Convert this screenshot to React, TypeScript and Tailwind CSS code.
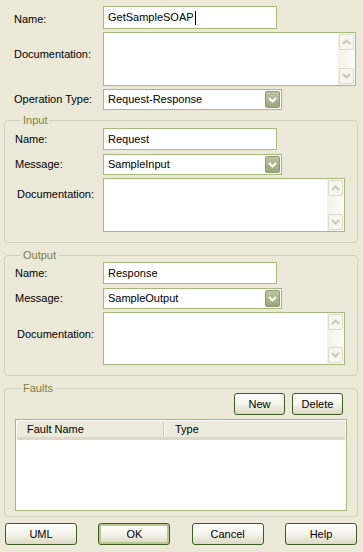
import React from 'react';

const font = { fontFamily: '"Liberation Sans", Arial, sans-serif' };

const Chevron = ({ up, color }: { up?: boolean; color: string }) => (
  <svg width="9" height="6" viewBox="0 0 9 6">
    <path d={up ? 'M1 5 L4.5 1.5 L8 5' : 'M1 1 L4.5 4.5 L8 1'} fill="none" stroke={color} strokeWidth="2" />
  </svg>
);

const TextBox = ({ value, width, caret }: { value: string; width: string; caret?: boolean }) => (
  <div className={`${width} h-[22px] bg-white border border-[#a5b97f] flex items-center pl-[4px]`}>
    <span>{value}</span>
    {caret && <span className="w-px h-[14px] bg-black ml-px" />}
  </div>
);

const Combo = ({ value }: { value: string }) => (
  <div className="w-[179px] h-[21px] bg-white border border-[#a5b97f] flex items-center pl-[4px] pr-px">
    <span className="flex-1">{value}</span>
    <div className="w-[15px] h-[17px] rounded-[2px] border border-[#8f9a74] bg-gradient-to-b from-[#bcc5a1] to-[#9aa679] flex items-center justify-center">
      <Chevron color="#ffffff" />
    </div>
  </div>
);

const TextArea = ({ width, height }: { width: string; height: string }) => (
  <div className={`${width} ${height} bg-white border border-[#a5b97f] flex justify-end`}>
    <div className="w-[17px] h-full bg-gradient-to-r from-[#f3f1e8] to-[#fdfdfb] flex flex-col justify-between py-px">
      <div className="h-[16px] mx-px rounded-[2px] border border-[#dcdacb] bg-[#f6f5ee] flex items-center justify-center">
        <Chevron up color="#c9c8ba" />
      </div>
      <div className="h-[16px] mx-px rounded-[2px] border border-[#dcdacb] bg-[#f6f5ee] flex items-center justify-center">
        <Chevron color="#c9c8ba" />
      </div>
    </div>
  </div>
);

const Button = ({ label, width, primary }: { label: string; width: string; primary?: boolean }) => (
  <button
    className={`${width} h-[22px] rounded-[3px] border border-[#3d5c22] bg-gradient-to-b from-[#ffffff] via-[#f5f4ea] to-[#dcd8c4] text-black ${
      primary ? 'shadow-[inset_0_0_0_2px_#b9c690]' : ''
    }`}
  >
    {label}
  </button>
);

const Group = ({ title, children, className }: { title: string; children: React.ReactNode; className: string }) => (
  <fieldset className={`ml-[4px] w-[354px] border border-[#d0d0bf] rounded-[4px] ${className}`}>
    <legend className="ml-[6px] px-[2px] text-[#7d8040] leading-[13px]">{title}</legend>
    {children}
  </fieldset>
);

export default function App() {
  return (
    <div className="w-[363px] h-[552px] bg-[#ece9d8] text-[11px] text-black overflow-hidden" style={font}>
      <div className="pt-[6px] pl-[14px]">
        <div className="flex items-center h-[23px]">
          <span className="w-[89px] pt-[3px]">Name:</span>
          <TextBox value="GetSampleSOAP" width="w-[174px] h-[23px]" caret />
        </div>
        <div className="flex mt-[3px]">
          <span className="w-[89px] pt-[14px]">Documentation:</span>
          <TextArea width="w-[253px]" height="h-[54px]" />
        </div>
        <div className="flex items-center mt-[3px]">
          <span className="w-[89px]">Operation Type:</span>
          <Combo value="Request-Response" />
        </div>
      </div>

      <Group title="Input" className="mt-[4px] pl-[10px] pb-[10px]">
        <div className="flex items-center mt-[1px]">
          <span className="w-[88px]">Name:</span>
          <TextBox value="Request" width="w-[174px]" />
        </div>
        <div className="flex items-center mt-[4px]">
          <span className="w-[88px]">Message:</span>
          <Combo value="SampleInput" />
        </div>
        <div className="flex mt-[3px]">
          <span className="w-[88px] pl-[2px] pt-[8px]">Documentation:</span>
          <TextArea width="w-[242px]" height="h-[54px]" />
        </div>
      </Group>

      <Group title="Output" className="mt-[6px] pl-[10px] pb-[10px]">
        <div className="flex items-center">
          <span className="w-[88px]">Name:</span>
          <TextBox value="Response" width="w-[174px]" />
        </div>
        <div className="flex items-center mt-[4px]">
          <span className="w-[88px]">Message:</span>
          <Combo value="SampleOutput" />
        </div>
        <div className="flex mt-[3px]">
          <span className="w-[88px] pl-[2px] pt-[14px]">Documentation:</span>
          <TextArea width="w-[242px]" height="h-[53px]" />
        </div>
      </Group>

      <Group title="Faults" className="mt-[6px] px-[10px] pb-[5px]">
        <div className="flex justify-end gap-[7px] pr-[4px] -mt-[2px]">
          <Button label="New" width="w-[51px]" />
          <Button label="Delete" width="w-[51px]" />
        </div>
        <div className="mt-[4px] h-[92px] bg-white border border-[#a5b97f] p-px">
          <div className="flex h-[19px] bg-[#ebeadb] border-b-[3px] border-[#dcd9c8] items-center">
            <div className="w-[150px] pl-[10px] flex items-center justify-between pr-[2px]">
              <span>Fault Name</span>
              <span className="w-[2px] h-[14px] border-l border-[#cbc7b8] bg-white" />
            </div>
            <span className="pl-[8px]">Type</span>
          </div>
        </div>
      </Group>

      <div className="flex justify-between pl-[5px] pr-[6px] mt-[6px]">
        <Button label="UML" width="w-[72px]" />
        <Button label="OK" width="w-[72px]" primary />
        <Button label="Cancel" width="w-[72px]" />
        <Button label="Help" width="w-[72px]" />
      </div>
    </div>
  );
}
